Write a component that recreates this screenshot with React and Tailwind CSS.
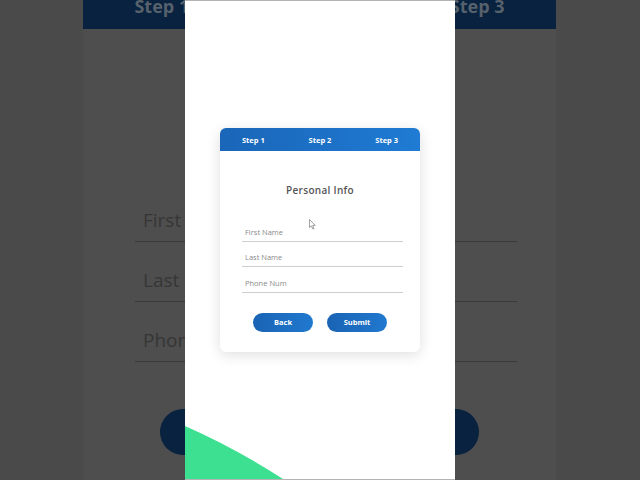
import React from 'react';

const font = { fontFamily: '"Open Sans", "Noto Sans", sans-serif' };

function BgField({ label }) {
    return (
        <div className="h-[60px] flex items-end pl-[8px] pb-[8px] border-b border-[#3a3a3a]">
            <span className="text-[19px] leading-[26px] text-[#363636]">{label}</span>
        </div>
    );
}

function Field({ label }) {
    return (
        <div className="h-[25.5px] flex items-end pl-[3px] pb-[4px] border-b border-[#cfcfcf]">
            <span className="text-[7.5px] leading-[10px] text-[#8a8a8a]">{label}</span>
        </div>
    );
}

function Cursor() {
    return (
        <svg width="7" height="11" viewBox="0 0 7 11" className="absolute left-[124px] top-[218px]">
            <path d="M0.5 0.5 L0.5 8.5 L2.4 6.8 L3.8 10 L5 9.5 L3.7 6.4 L6.2 6.4 Z" fill="#fff" stroke="#777" strokeWidth="0.7" strokeLinejoin="round" />
        </svg>
    );
}

export default function App() {
    return (
        <div className="relative w-[640px] h-[480px] overflow-hidden bg-[#4a4a4a]" style={font}>
            {/* dimmed, enlarged copy of the form behind the video frame */}
            <div className="absolute inset-y-0 left-[83px] w-[473px] bg-[#4e4e4e] flex flex-col">
                <div className="h-[29px] bg-[#08223f] grid grid-cols-3 text-center overflow-hidden">
                    <span className="-mt-[7px] text-[18px] font-bold text-[#56616c]">Step 1</span>
                    <span className="-mt-[7px] text-[18px] font-bold text-[#56616c]">Step 2</span>
                    <span className="-mt-[7px] text-[18px] font-bold text-[#56616c]">Step 3</span>
                </div>
                <div className="mt-[153px] ml-[52px] w-[382px]">
                    <BgField label="First Name" />
                    <BgField label="Last Name" />
                    <BgField label="Phone Num" />
                </div>
                <div className="mt-[47px] pl-[77px] flex gap-[34px]">
                    <div className="w-[143px] h-[46px] rounded-full bg-[#08223f]" />
                    <div className="w-[142px] h-[46px] rounded-full bg-[#08223f]" />
                </div>
            </div>

            {/* video frame */}
            <div className="absolute top-0 left-[185px] w-[270px] h-[480px] bg-white border-y border-[#b4b4b4] flex items-center justify-center overflow-hidden">
                <div className="w-[200px] rounded-[6px] bg-white shadow-[0_3px_14px_rgba(0,0,0,0.13)]">
                    <div className="h-[23px] pt-[1px] rounded-t-[6px] bg-gradient-to-r from-[#1a66b9] to-[#1f7bd3] grid grid-cols-3 items-center text-center">
                        <span className="text-[7.5px] font-bold text-white">Step 1</span>
                        <span className="text-[7.5px] font-bold text-white">Step 2</span>
                        <span className="text-[7.5px] font-bold text-white">Step 3</span>
                    </div>
                    <div className="pt-[32px] pb-[20px]">
                        <h2 className="text-center text-[10px] leading-[14px] font-semibold tracking-[0.3px] text-[#555]">
                            Personal Info
                        </h2>
                        <div className="mt-[19px] ml-[22px] w-[161px]">
                            <Field label="First Name" />
                            <Field label="Last Name" />
                            <Field label="Phone Num" />
                        </div>
                        <div className="mt-[20px] flex justify-center gap-[14px]">
                            <button className="w-[60px] h-[19px] rounded-full bg-gradient-to-r from-[#1a63b4] to-[#2079cf] text-[7.5px] font-bold text-white">
                                Back
                            </button>
                            <button className="w-[60px] h-[19px] rounded-full bg-gradient-to-r from-[#1a63b4] to-[#2079cf] text-[7.5px] font-bold text-white">
                                Submit
                            </button>
                        </div>
                    </div>
                </div>
                <Cursor />
                <svg width="98" height="53" viewBox="0 0 98 53" className="absolute left-0 bottom-0">
                    <path d="M0 0 Q50 22 98 53 L0 53 Z" fill="#3ddf90" />
                </svg>
            </div>
        </div>
    );
}
